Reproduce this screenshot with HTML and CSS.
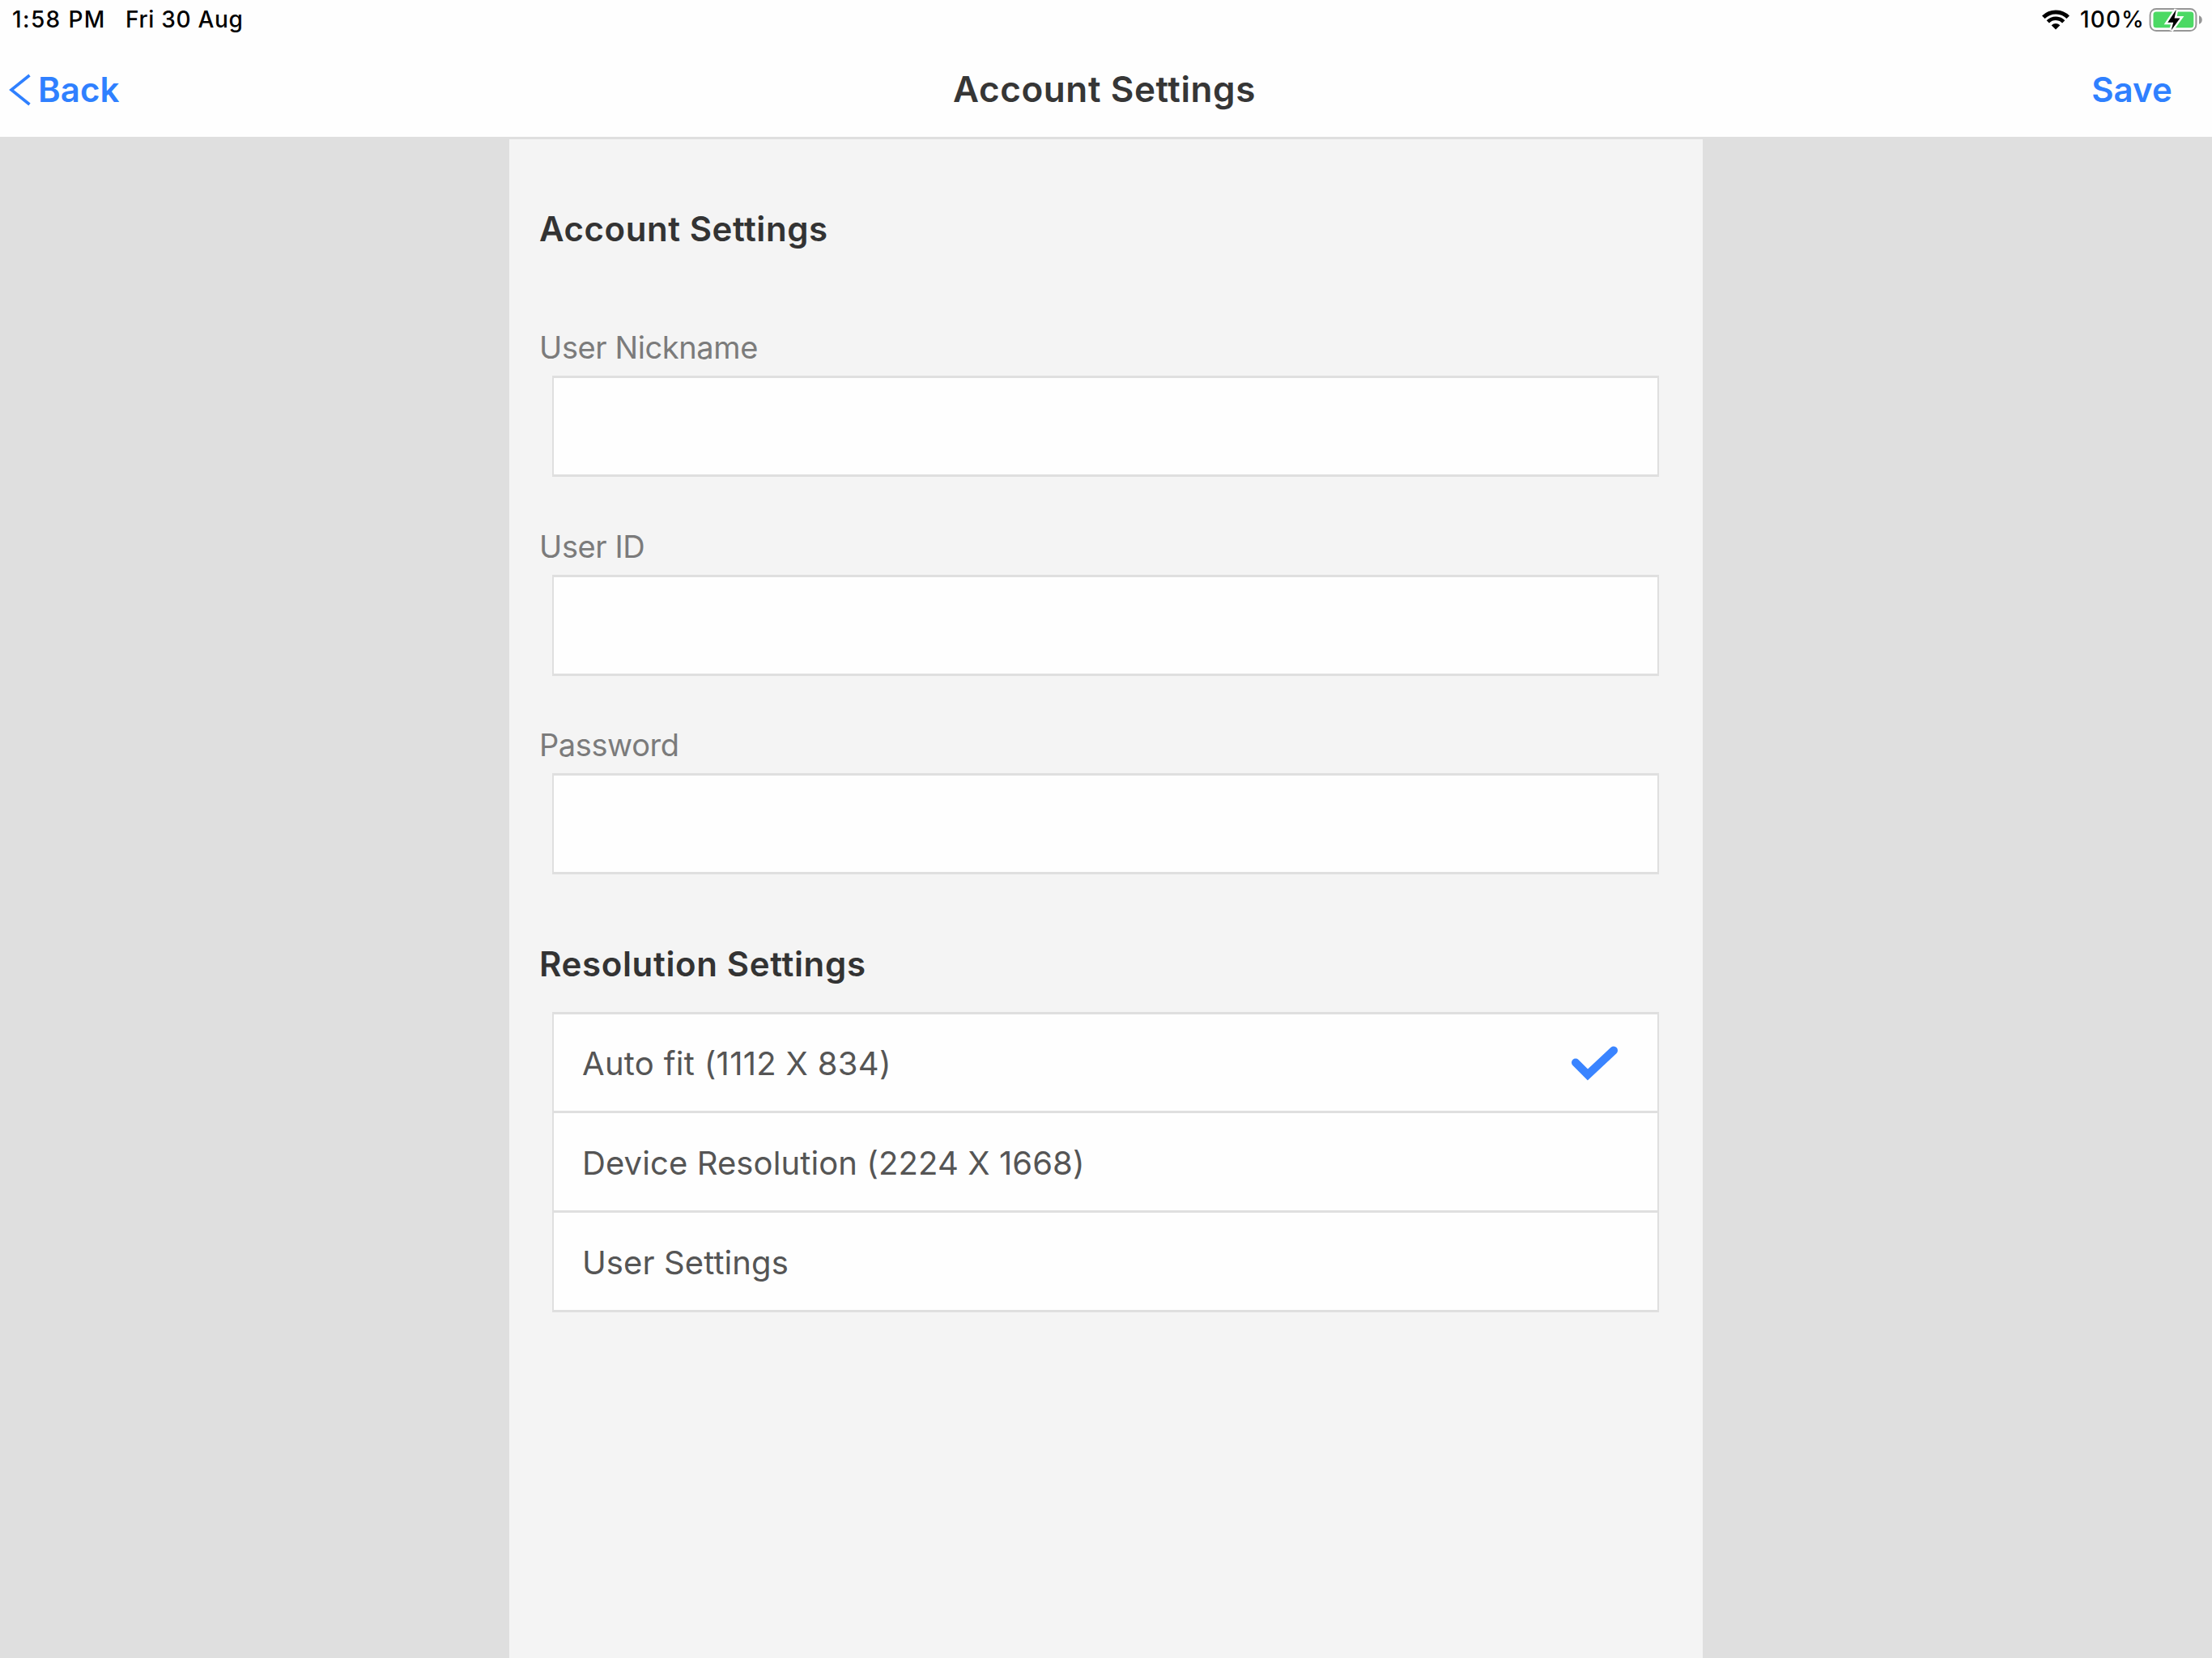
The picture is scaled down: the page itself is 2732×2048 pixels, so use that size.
FILE: index.html
```html
<!DOCTYPE html>
<html lang="en">
<head>
    <meta charset="UTF-8">
    <meta name="viewport" content="width=device-width, initial-scale=1.0">
    <title>Account Settings</title>
    <link rel="stylesheet" href="styles.css">
</head>
<body>
    <header class="top-bar">
      <!-- Status bar -->
      <div class="status-bar">
        <span class="status-time">1:58 PM</span>
        <span class="status-date">Fri 30 Aug</span>
        <div class="status-right">
          <svg class="wifi-icon" viewBox="0 0 34 25" width="34" height="25">
            <path d="M1.8 9.3A21.5 21.5 0 0 1 32.2 9.3" fill="none" stroke="#000" stroke-width="5"/>
            <path d="M7.3 14.8A13.7 13.7 0 0 1 26.7 14.8" fill="none" stroke="#000" stroke-width="4.6"/>
            <path d="M17 24.5L11.7 19.2A7.5 7.5 0 0 1 22.3 19.2Z" fill="#000"/>
          </svg>
          <span class="status-percent">100%</span>
          <svg class="battery-icon" viewBox="0 0 67 31" width="67" height="31">
            <rect x="1.6" y="1.9" width="56.8" height="27.2" rx="7.5" fill="none" stroke="#969696" stroke-width="2"/>
            <rect x="5.5" y="5.6" width="49.8" height="19.6" rx="3.5" fill="#4cd964"/>
            <path d="M62 10.2C67 11.5 67 19.5 62 20.8Z" fill="#969696"/>
            <path class="bolt" d="M33.8 2.8L23.3 18.8H30.2L27.6 28.6L38.5 13.6H31.6Z"/>
          </svg>
        </div>
      </div>

      <!-- Navigation bar -->
      <nav class="nav-bar">
        <a href="#" class="nav-back">
          <svg viewBox="0 0 28 40" width="28" height="40">
            <path d="M25.5 2L3 20L25.5 38" fill="none" stroke="#2f80ff" stroke-width="3.6"/>
          </svg>
          <span>Back</span>
        </a>
        <h1 class="nav-title">Account Settings</h1>
        <a href="#" class="nav-save">Save</a>
      </nav>
    </header>

    <main class="panel">
      <h2 class="section-title">Account Settings</h2>
      <div class="field">
        <label for="nickname">User Nickname</label>
        <input type="text" id="nickname">
      </div>
      <div class="field">
        <label for="userid">User ID</label>
        <input type="text" id="userid">
      </div>
      <div class="field">
        <label for="password">Password</label>
        <input type="password" id="password">
      </div>

      <h2 class="section-title resolution-title">Resolution Settings</h2>
      <ul class="option-list">
        <li class="option option-auto">
          <span>Auto fit (1112 X 834)</span>
          <svg viewBox="0 0 58 44" width="58" height="44">
            <path d="M6 20.5L21 35.5L53 5.5" fill="none" stroke="#3a84ff" stroke-width="10" stroke-linecap="round" stroke-linejoin="miter"/>
          </svg>
        </li>
        <li class="option"><span>Device Resolution (2224 X 1668)</span></li>
        <li class="option"><span>User Settings</span></li>
      </ul>
    </main>
</body>
</html>
```
FILE: styles.css
```css
* {
  box-sizing: border-box;
  margin: 0;
  padding: 0;
}

body {
  display: flex;
  flex-direction: column;
  align-items: center;
  min-height: 100vh;
  font-family: Inter, "Liberation Sans", sans-serif;
  background-color: #dfdfdf;
  overflow: hidden;
}

/* Top bar */
.top-bar {
  width: 100%;
  height: 172px;
  background-color: #fefefe;
  border-bottom: 3px solid #dfdfdf;
}

.status-bar {
  display: flex;
  align-items: center;
  height: 48px;
  padding: 0 11px 0 15px;
  font-size: 28px;
  font-weight: 500;
  color: #000;
}

.status-time {
  width: 140px;
  letter-spacing: 1.4px;
}

.status-date {
  letter-spacing: 0.7px;
}

.status-right {
  display: flex;
  align-items: center;
  margin-left: auto;
}

.status-percent {
  width: 85px;
  margin-left: 13px;
  letter-spacing: 1.1px;
}

.bolt {
  fill: #000;
  stroke: #fefefe;
  stroke-width: 5px;
  paint-order: stroke;
}

.nav-bar {
  display: grid;
  grid-template-columns: 1fr auto 1fr;
  align-items: center;
  height: 121px;
  padding: 4px 49px 0 11px;
}

.nav-back,
.nav-save {
  font-size: 42px;
  font-weight: 600;
  line-height: 50px;
  letter-spacing: 0.1px;
  color: #2f80ff;
  text-decoration: none;
}

.nav-back {
  display: flex;
  align-items: center;
  gap: 8px;
}

.nav-save {
  justify-self: end;
}

.nav-title {
  margin: 0 0 2px 34px;
  font-size: 44px;
  font-weight: 600;
  line-height: 50px;
  letter-spacing: 0.6px;
  color: #363636;
}

/* Settings panel */
.panel {
  flex: 1;
  width: 1474px;
  padding: 86px 54px 0 53px;
  background-color: #f4f4f4;
}

.section-title {
  margin-bottom: 99px;
  margin-left: -16px;
  font-size: 42px;
  font-weight: 600;
  line-height: 50px;
  letter-spacing: 0.55px;
  color: #333;
}

.resolution-title {
  margin-top: 86px;
  margin-bottom: 34px;
  letter-spacing: 0.65px;
}

.field {
  margin-bottom: 63.5px;
}

.field label {
  display: block;
  margin: 0 0 13px -16px;
  font-size: 38px;
  line-height: 44px;
  letter-spacing: -0.4px;
  color: #7b7b7b;
}

.field input {
  display: block;
  width: 100%;
  height: 125px;
  padding: 0 36px;
  border: solid #dfdfdf;
  border-width: 3px 2px;
  border-radius: 0;
  background-color: #fefefe;
  font: inherit;
  font-size: 40px;
}

.option-list {
  list-style: none;
  border: solid #dfdfdf;
  border-width: 3px 2px;
  background-color: #fefefe;
}

.option {
  display: flex;
  align-items: center;
  justify-content: space-between;
  height: 123px;
  padding: 2px 49px 0 35px;
  font-size: 40px;
  letter-spacing: 0.1px;
  color: #555;
}

.option + .option {
  border-top: 3px solid #dfdfdf;
}

.option-auto {
  height: 119px;
  letter-spacing: 0.3px;
}
```
